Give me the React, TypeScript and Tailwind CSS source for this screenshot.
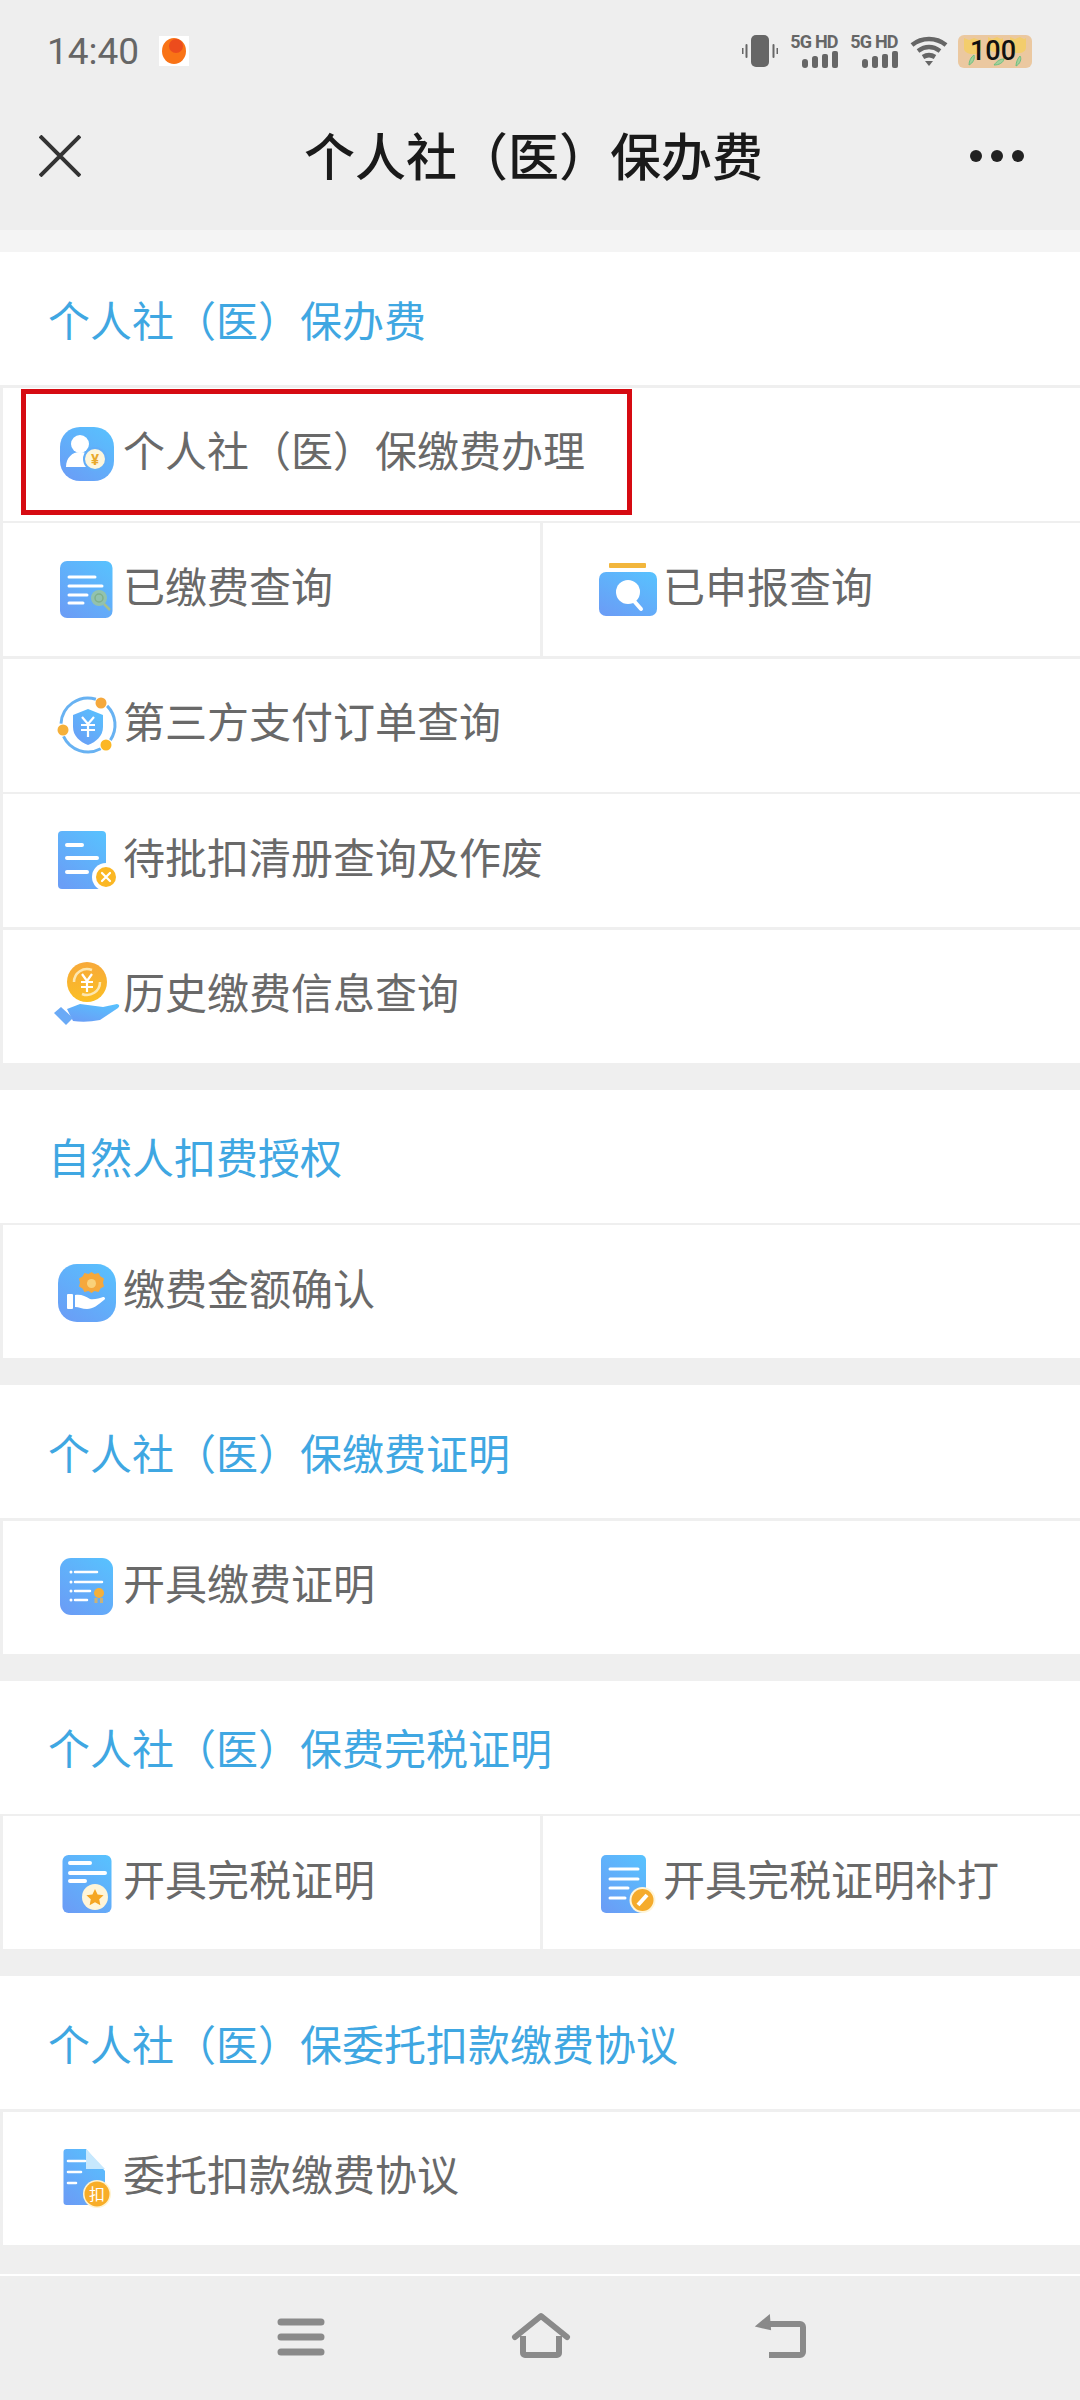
import React from "react";

const cjk = "font-['Noto_Sans_CJK_SC','Noto_Sans',sans-serif]";

// shared blue fill for all the menu icons
function IconDefs() {
  return (
    <svg className="absolute h-0 w-0">
      <defs>
        <linearGradient id="blue" x1="0.9" y1="0" x2="0.2" y2="1">
          <stop offset="0" stopColor="#58c1fe" />
          <stop offset="1" stopColor="#6a9ef6" />
        </linearGradient>
        <linearGradient id="coin" x1="0.5" y1="0" x2="0.5" y2="1">
          <stop offset="0" stopColor="#f7a93a" />
          <stop offset="1" stopColor="#fbbf24" />
        </linearGradient>
      </defs>
    </svg>
  );
}

// every icon is drawn in a 66x66 box, x=0 of the box is x=56 of the page row
function Box({ children }: { children: React.ReactNode }) {
  return (
    <svg width="66" height="66" viewBox="0 0 66 66" className="shrink-0 overflow-visible">
      {children}
    </svg>
  );
}

const PayIcon = () => (
  <Box>
    <rect x="4" y="6" width="54" height="54" rx="20" fill="url(#blue)" />
    <circle cx="24" cy="23" r="9" fill="#fff" />
    <path d="M10 46c0-9 6-15 14-15 4 0 7 1 9 3l-2 12z" fill="#fff" />
    <circle cx="39" cy="38" r="12" fill="#62aef8" />
    <circle cx="39" cy="38" r="10" fill="#fdf6dc" />
    <text x="39" y="44" fontSize="15" fontWeight="700" fill="#e8a92c" textAnchor="middle" fontFamily="Roboto">¥</text>
  </Box>
);

const PaidIcon = () => (
  <Box>
    <rect x="4" y="4" width="52.500" height="57" rx="7" fill="url(#blue)" />
    <path d="M13 20h26M13 29h33M13 38h18M13 46h14" stroke="#fff" strokeWidth="3" strokeLinecap="round" />
    <circle cx="43" cy="41" r="8" fill="#9fc79a" opacity="0.8" />
    <circle cx="43" cy="41" r="4" fill="none" stroke="#7fb08c" strokeWidth="1.500" />
    <path d="M48 47l6 6" stroke="#a6c08e" strokeWidth="2.500" />
  </Box>
);

const ReportedIcon = () => (
  <Box>
    <rect x="13" y="6" width="37" height="5" rx="1" fill="#f2b63c" />
    <rect x="3" y="15" width="58" height="44" rx="7" fill="url(#blue)" />
    <circle cx="32" cy="35" r="12" fill="#fff" />
    <path d="M38 44l7 8" stroke="#fff" strokeWidth="4" strokeLinecap="round" />
  </Box>
);

const OrderIcon = () => (
  <Box>
    <path
      d="M51.100 13.900A27 27 0 0 1 54.400 48.100M44.700 56.800A27 27 0 0 1 7.500 44.400M5 31.600A27 27 0 0 1 39.900 7.200"
      fill="none"
      stroke="#68b2f2"
      strokeWidth="3"
    />
    <path d="M32 17l15 6v12c0 9-7 15-15 18-8-3-15-9-15-18V23z" fill="url(#blue)" />
    <path d="M26 25l6 7 6-7M32 32v13M25 33h14M25 38h14" fill="none" stroke="#fff" strokeWidth="2.200" />
    <circle cx="45" cy="11" r="5.500" fill="#f5a83c" />
    <circle cx="7" cy="38" r="5.500" fill="#f5b03a" />
    <circle cx="50" cy="53" r="5.500" fill="#fbb724" />
  </Box>
);

const PendingIcon = () => (
  <Box>
    <rect x="2" y="3" width="48" height="58" rx="4" fill="url(#blue)" />
    <path d="M11 17h15M11 30h30M11 44h20" stroke="#fff" strokeWidth="4" strokeLinecap="round" />
    <circle cx="50" cy="49" r="14" fill="#fff" />
    <circle cx="50" cy="49" r="10" fill="#fbb724" />
    <path d="M46 45l8 8M54 45l-8 8" stroke="#fff" strokeWidth="2.200" strokeLinecap="round" />
  </Box>
);

const HistoryIcon = () => (
  <Box>
    <circle cx="31" cy="19" r="20" fill="url(#coin)" />
    <path d="M18 19a13 13 0 0 1 18-12M44 19a13 13 0 0 1-18 12" fill="none" stroke="#fde7b0" strokeWidth="2.500" />
    <path d="M26 11l5 7 5-7M31 18v11M25 19h12M25 24h12" fill="none" stroke="#fff" strokeWidth="2.200" />
    <path d="M11 46L24 41L47 44L61 41Q65 42 62 45L44 57Q30 60 17 58z" fill="url(#blue)" />
    <path d="M-2 50l7-6 12 11-7 7z" fill="#6aaaf6" />
  </Box>
);

const ConfirmIcon = () => (
  <Box>
    <rect x="2" y="5" width="58" height="58" rx="19" fill="url(#blue)" />
    <path d="M35.500 13l3 2 4-1 2 3.500 3.500 2-1 4 1 4-3.500 2-2 3.500-4-1-3 2-3-2-4 1-2-3.500-3.500-2 1-4-1-4 3.500-2 2-3.500 4 1z" fill="#f5a83c" />
    <circle cx="35.500" cy="24.500" r="4.500" fill="#f9d27a" />
    <rect x="11" y="35" width="6" height="15" rx="1" fill="#fff" />
    <path d="M19 36c6-1 10 1 15 4 4 1 10-1 13-2 2 0 3 2 1 3-6 5-11 9-17 9-5 0-8-2-12-2z" fill="#fff" />
  </Box>
);

const ProofIcon = () => (
  <Box>
    <rect x="4" y="4" width="53" height="57" rx="11" fill="url(#blue)" />
    <path d="M19 18h22M19 28h27M19 37h15M19 46h12" stroke="#fff" strokeWidth="2.500" strokeLinecap="round" />
    <circle cx="15" cy="18" r="1.500" fill="#fff" />
    <circle cx="15" cy="28" r="1.500" fill="#fff" />
    <circle cx="15" cy="37" r="1.500" fill="#fff" />
    <circle cx="15" cy="46" r="1.500" fill="#fff" />
    <circle cx="43" cy="39" r="5" fill="#f5b03a" />
    <path d="M38.500 44h3v5h-3zM44 44h3v5h-3z" fill="#c9b27a" />
  </Box>
);

const TaxIcon = () => (
  <Box>
    <rect x="6.500" y="5" width="49" height="58" rx="6" fill="url(#blue)" />
    <path d="M14 13h20M14 23h35M14 31h15" stroke="#fff" strokeWidth="4" strokeLinecap="round" />
    <circle cx="39" cy="47" r="13" fill="#fff5d8" />
    <path d="M39 39l2.600 5.500 6 .7-4.400 4 1.200 6-5.400-3-5.400 3 1.200-6-4.400-4 6-.7z" fill="#f5a623" />
  </Box>
);

const TaxReprintIcon = () => (
  <Box>
    <rect x="5" y="5" width="45" height="58" rx="5" fill="url(#blue)" />
    <path d="M14 19h28M14 29h28M14 38h18M14 48h15" stroke="#fff" strokeWidth="3" strokeLinecap="round" />
    <circle cx="46.500" cy="50" r="13" fill="#fff5d8" />
    <circle cx="46.500" cy="50" r="11" fill="#f5ab2c" />
    <path d="M42 55l9-10" stroke="#fff" strokeWidth="4" />
  </Box>
);

const AgreementIcon = () => (
  <Box>
    <path d="M7.500 7a3 3 0 0 1 3-3H30l19 22v31a3 3 0 0 1-3 3H10.500a3 3 0 0 1-3-3z" fill="url(#blue)" />
    <path d="M30 4l19 20H30z" fill="#c7e8fd" />
    <path d="M12 16h17M12 27h13M12 38h8" stroke="#fff" strokeWidth="2.600" strokeLinecap="round" />
    <circle cx="41" cy="49" r="14" fill="#fff3d0" />
    <circle cx="41" cy="49" r="12.500" fill="#f8ad28" />
    <text x="41" y="55" fontSize="16" fill="#fff" textAnchor="middle" className={cjk}>扣</text>
  </Box>
);

type Item = { icon: React.ReactNode; label: string };
type Section = { title: string; rows: Item[][] };

const sections: Section[] = [
  {
    title: "个人社（医）保办费",
    rows: [
      [{ icon: <PayIcon />, label: "个人社（医）保缴费办理" }],
      [
        { icon: <PaidIcon />, label: "已缴费查询" },
        { icon: <ReportedIcon />, label: "已申报查询" },
      ],
      [{ icon: <OrderIcon />, label: "第三方支付订单查询" }],
      [{ icon: <PendingIcon />, label: "待批扣清册查询及作废" }],
      [{ icon: <HistoryIcon />, label: "历史缴费信息查询" }],
    ],
  },
  { title: "自然人扣费授权", rows: [[{ icon: <ConfirmIcon />, label: "缴费金额确认" }]] },
  { title: "个人社（医）保缴费证明", rows: [[{ icon: <ProofIcon />, label: "开具缴费证明" }]] },
  {
    title: "个人社（医）保费完税证明",
    rows: [
      [
        { icon: <TaxIcon />, label: "开具完税证明" },
        { icon: <TaxReprintIcon />, label: "开具完税证明补打" },
      ],
    ],
  },
  { title: "个人社（医）保委托扣款缴费协议", rows: [[{ icon: <AgreementIcon />, label: "委托扣款缴费协议" }]] },
];

function Cell({ item, className }: { item: Item; className: string }) {
  return (
    <div className={`flex h-full items-center bg-white ${className}`}>
      {item.icon}
      <span className="mb-[10px] ml-[1px] whitespace-nowrap text-[42px] leading-none text-[#696969]">{item.label}</span>
    </div>
  );
}

function Row({ items, boxed }: { items: Item[]; boxed: boolean }) {
  return (
    <div className="relative flex h-[133px] gap-[3px] pl-[3px]">
      {items.length === 1 ? (
        <Cell item={items[0]} className="flex-1 pl-[53px]" />
      ) : (
        <>
          <Cell item={items[0]} className="w-[537px] pl-[53px]" />
          <Cell item={items[1]} className="flex-1 pl-[53px]" />
        </>
      )}
      {boxed && (
        <div className="absolute left-[21px] top-[1px] h-[126px] w-[611px] border-[5px] border-[#d60b12]" />
      )}
    </div>
  );
}

export default function App() {
  return (
    <div className={`relative flex h-[2400px] w-[1080px] flex-col overflow-hidden bg-[#efefef] ${cjk}`}>
      <IconDefs />

      {/* status bar */}
      <div className="flex h-[88px] items-center justify-between bg-[#eeeeee] pl-[47px] pr-[48px] pt-[14px]">
        <div className="flex items-center gap-[20px]">
          <span className="font-['Roboto',sans-serif] text-[37px] leading-none text-[#666]">14:40</span>
          <svg width="30" height="30" viewBox="0 0 30 30">
            <rect width="30" height="30" fill="#fff" />
            <ellipse cx="15" cy="15" rx="12" ry="13" fill="#f97316" />
            <ellipse cx="17" cy="10" rx="7" ry="7" fill="#e8421f" opacity="0.8" />
          </svg>
        </div>
        <div className="flex items-center">
          <svg width="36" height="32" viewBox="0 0 36 32" fill="#666">
            <rect x="9" y="0" width="18" height="32" rx="5" />
            <rect x="3.500" y="9" width="2" height="14" rx="1" />
            <rect x="30.500" y="9" width="2" height="14" rx="1" />
            <rect x="0" y="13" width="1.500" height="6" />
            <rect x="34.500" y="13" width="1.500" height="6" />
          </svg>
          {[0, 1].map((n) => (
            <div key={n} className="ml-[12px] flex w-[48px] flex-col items-center">
              <span className="whitespace-nowrap font-['Roboto',sans-serif] text-[18px] font-bold leading-[15px] tracking-[-0.8px] text-[#666]">5G HD</span>
              <svg width="36" height="17" viewBox="0 0 36 17" fill="#666" className="mt-[2px] self-end">
                <rect x="0" y="8" width="6" height="9" rx="3" />
                <rect x="10" y="5" width="6" height="12" rx="2.500" />
                <rect x="20" y="3" width="6" height="14" rx="2" />
                <rect x="30" y="0" width="6" height="17" rx="2" />
              </svg>
            </div>
          ))}
          <svg width="38" height="30" viewBox="0 0 38 30" className="ml-[12px]" fill="none" stroke="#666" strokeWidth="4.500">
            <path d="M2 9c10-8 24-8 34 0M8 15c7-5 15-5 22 0M13 21c4-2.500 8-2.500 12 0" />
            <path d="M15 25h8l-4 5z" fill="#666" stroke="none" />
          </svg>
          <div className="relative ml-[10px] flex h-[33px] w-[74px] items-center justify-center overflow-hidden rounded-[6px] bg-[#ebc8a0] pr-[4px]">
            <svg width="74" height="33" viewBox="0 0 74 33" className="absolute left-0 top-0">
              <path d="M6 3l5 2 5-2 5 2 2-1v9c0 4-3 6-8 6s-9-2-9-6z" fill="#f3cd6c" />
              <path d="M30 2l4 2 5-2 4 2 2-1v8c0 4-3 6-7 6s-8-2-8-6z" fill="#f3cd6c" />
              <path d="M52 2l5 2 5-2 4 2 2-1v9c0 4-3 6-8 6s-8-2-8-6z" fill="#f3cd6c" />
              <path d="M11 30c0-4 2-8 5-10 1 4-1 8-5 10zM36 30c3-4 6-6 10-6-1 4-5 6-10 6zM58 31c0-4 2-8 4-10 2 3 0 8-4 10z" fill="#a3cf9a" stroke="#6cbf80" strokeWidth="1" />
            </svg>
            <span className="relative font-['Roboto',sans-serif] text-[27px] font-medium leading-none text-[#111]">100</span>
          </div>
        </div>
      </div>

      {/* header */}
      <div className="flex h-[142px] items-center justify-between bg-[#eeeeee] pb-[6px] pl-[39px] pr-[56px]">
        <svg width="42" height="42" viewBox="0 0 42 42" stroke="#333" strokeWidth="4" fill="none">
          <path d="M1 1l40 40M41 1L1 41" />
        </svg>
        <span className="mb-[4px] ml-[16px] text-[51px] font-medium leading-none text-[#1a1a1a]">个人社（医）保办费</span>
        <div className="flex gap-[9px]">
          <span className="h-[12px] w-[12px] rounded-full bg-[#222]" />
          <span className="h-[12px] w-[12px] rounded-full bg-[#222]" />
          <span className="h-[12px] w-[12px] rounded-full bg-[#222]" />
        </div>
      </div>
      <div className="h-[22px] bg-[#f4f4f4]" />

      {/* sections */}
      <div className="flex flex-col gap-[27px]">
        {sections.map((section, s) => (
          <div key={section.title} className="flex flex-col gap-[2.5px]">
            <div className="flex h-[133px] items-center bg-white pl-[48px]">
              <span className="text-[42px] leading-none text-[#3fa7e2]">{section.title}</span>
            </div>
            {section.rows.map((items, r) => (
              <Row key={r} items={items} boxed={s === 0 && r === 0} />
            ))}
          </div>
        ))}
      </div>

      {/* bottom nav */}
      <div className="mt-auto flex h-[126px] items-start border-t-2 border-white bg-[#eeeeee]">
        <svg width="1080" height="100" viewBox="0 0 1080 100" fill="none" stroke="#8a8a8a">
          <path d="M281 46h40M281 61h40M281 76h40" strokeWidth="7" strokeLinecap="round" />
          <path d="M515 61l26-21 26 21" strokeWidth="6" strokeLinecap="round" strokeLinejoin="round" />
          <path d="M523 60v17a2 2 0 0 0 2 2h32a2 2 0 0 0 2-2V60" strokeWidth="6" />
          <path d="M768 48h32a3 3 0 0 1 3 3v25a3 3 0 0 1-3 3h-31" strokeWidth="6" />
          <path d="M769 40l-12 10 13 3z" fill="#8a8a8a" stroke="#8a8a8a" strokeWidth="2" />
        </svg>
      </div>
    </div>
  );
}
